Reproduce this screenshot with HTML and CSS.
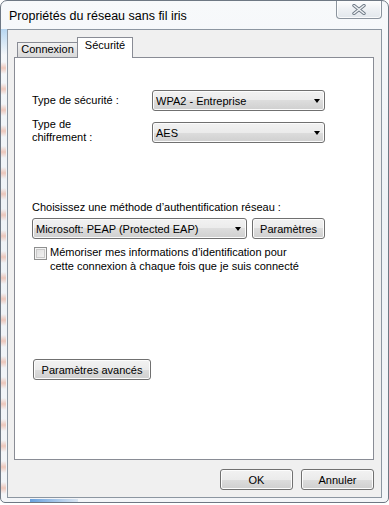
FILE: index.html
```html
<!DOCTYPE html>
<html lang="fr">
<head>
    <meta charset="UTF-8">
    <meta name="viewport" content="width=device-width, initial-scale=1.0">
    <title>Propriétés du réseau sans fil iris</title>
    <link rel="stylesheet" href="styles.css">
</head>
<body>
    <div class="window">
        <div class="titlebar">
            <span class="title">Propriétés du réseau sans fil iris</span>
            <div class="close-btn">
                <svg width="14" height="11" viewBox="0 0 14 11">
                    <path d="M2 1.5 L12 9.5 M12 1.5 L2 9.5" stroke="#6f7a86" stroke-width="3.4" stroke-linecap="round"/>
                    <path d="M2 1.5 L12 9.5 M12 1.5 L2 9.5" stroke="#eef1f4" stroke-width="1.6" stroke-linecap="round"/>
                </svg>
            </div>
        </div>

        <div class="client">
            <div class="tabs">
                <div class="tab">Connexion</div>
                <div class="tab active">Sécurité</div>
            </div>

            <div class="panel">
                <div class="row row-first">
                    <div class="field-label">Type de sécurité :</div>
                    <div class="combo combo-type">WPA2 - Entreprise<span class="arrow"></span></div>
                </div>
                <div class="row row-cipher">
                    <div class="field-label">Type de<br>chiffrement :</div>
                    <div class="combo combo-type">AES<span class="arrow"></span></div>
                </div>

                <div class="auth-label">Choisissez une méthode d’authentification réseau :</div>
                <div class="auth-row">
                    <div class="combo combo-auth">Microsoft: PEAP (Protected EAP)<span class="arrow"></span></div>
                    <button class="btn btn-settings">Paramètres</button>
                </div>

                <div class="check-row">
                    <span class="checkbox"></span>
                    <span class="check-text">Mémoriser mes informations d’identification pour<br>cette connexion à chaque fois que je suis connecté</span>
                </div>

                <button class="btn btn-advanced">Paramètres avancés</button>
            </div>

            <div class="actions">
                <button class="btn">OK</button>
                <button class="btn">Annuler</button>
            </div>
        </div>
    </div>
</body>
</html>
```

FILE: styles.css
```css
html, body {
    margin: 0;
    padding: 0;
    background: #ffffff;
}

body {
    font-family: "Liberation Sans", Arial, sans-serif;
    font-size: 11px;
    color: #000;
}

.window {
    box-sizing: border-box;
    width: 389px;
    height: 503px;
    border: 1px solid #6e7884;
    border-radius: 7px 7px 5px 5px;
    display: flex;
    flex-direction: column;
    background:
        linear-gradient(to right, rgba(70, 140, 215, 0.8), rgba(140, 180, 220, 0.25)) 29px 100% / 48px 3px no-repeat,
        linear-gradient(to bottom, rgba(120, 180, 230, 0.5), rgba(120, 180, 230, 0)) 0 28px / 6px 26px no-repeat,
        repeating-linear-gradient(to bottom, rgba(236, 150, 120, 0) 0, rgba(236, 150, 120, 0) 5px, rgba(232, 145, 115, 0.45) 11px, rgba(236, 150, 120, 0) 17px, rgba(236, 150, 120, 0) 21px) 0 56px / 5px 100% no-repeat,
        linear-gradient(to bottom, #f7f9fb, #eef2f6 40%, #f3f5f8);
    overflow: hidden;
}

.titlebar {
    height: 28px;
    display: flex;
    justify-content: space-between;
    align-items: flex-start;
    padding-left: 8px;
    padding-right: 6px;
}

.title {
    margin-top: 7px;
    line-height: 16px;
    font-size: 12.5px;
}

.close-btn {
    box-sizing: border-box;
    width: 46px;
    height: 19px;
    margin-top: -1px;
    border: 1px solid #8b949e;
    border-top: none;
    border-radius: 0 0 4px 4px;
    background: linear-gradient(to bottom, #ffffff, #eef1f4 50%, #e2e7ec);
    box-shadow: inset 0 0 0 1px rgba(255, 255, 255, 0.8);
    display: flex;
    justify-content: center;
    align-items: center;
}

.client {
    box-sizing: border-box;
    height: 469px;
    margin: 0 6px;
    border: 1px solid #8c96a1;
    background: #f0f0f0;
    padding: 7px 7px 7px 6px;
    display: flex;
    flex-direction: column;
}

.tabs {
    height: 20px;
    display: flex;
    align-items: flex-end;
    padding-left: 3px;
}

.tab {
    box-sizing: border-box;
    height: 15px;
    width: 61px;
    border: 1px solid #898c95;
    border-bottom: none;
    background: linear-gradient(to bottom, #f2f2f2, #e4e4e4 50%, #d9d9d9);
    text-align: center;
    line-height: 13px;
}

.tab.active {
    width: 56px;
    height: 21px;
    margin-left: -1px;
    margin-bottom: -1px;
    background: #ffffff;
    position: relative;
    z-index: 1;
    padding-top: 1px;
}

.panel {
    box-sizing: border-box;
    height: 403px;
    border: 1px solid #898c95;
    background: #ffffff;
    padding-left: 17px;
    display: flex;
    flex-direction: column;
    align-items: flex-start;
}

.row {
    display: flex;
    align-items: center;
}

.row-first {
    margin-top: 32px;
}

.row-cipher {
    margin-top: 7px;
    align-items: flex-end;
}

.field-label {
    width: 120px;
    line-height: 13px;
}

.row-cipher .field-label {
    margin-bottom: -1px;
}

.combo {
    box-sizing: border-box;
    height: 21px;
    border: 1px solid #707070;
    border-radius: 3px;
    background: linear-gradient(to bottom, #f2f2f2, #ebebeb 50%, #dddddd 50%, #cfcfcf);
    box-shadow: inset 0 0 0 1px #fcfcfc;
    display: flex;
    align-items: center;
    justify-content: space-between;
    padding: 0 4px 0 3px;
    white-space: nowrap;
}

.combo-type {
    width: 173px;
}

.combo-auth {
    width: 215px;
    padding-right: 5px;
}

.arrow {
    width: 0;
    height: 0;
    border-left: 3.5px solid transparent;
    border-right: 3.5px solid transparent;
    border-top: 4px solid #000;
    margin-top: 1px;
}

.auth-label {
    margin-top: 57px;
    line-height: 15px;
}

.auth-row {
    margin-top: 3px;
    display: flex;
    gap: 5px;
}

.btn {
    box-sizing: border-box;
    height: 21px;
    width: 73px;
    border: 1px solid #707070;
    border-radius: 3px;
    background: linear-gradient(to bottom, #f2f2f2, #ebebeb 50%, #dddddd 50%, #cfcfcf);
    box-shadow: inset 0 0 0 1px #fcfcfc;
    font-family: inherit;
    font-size: 11px;
    color: #000;
    padding: 0;
    text-align: center;
}

.check-row {
    margin-top: 8px;
    margin-left: 2px;
    display: flex;
    align-items: flex-start;
}

.checkbox {
    box-sizing: border-box;
    width: 13px;
    height: 13px;
    border: 1px solid #8e8f8f;
    background: linear-gradient(135deg, #dcdcdc, #f6f6f6);
    box-shadow: inset 0 0 0 1px #f4f4f4, inset 0 0 0 2px #c9c9c9;
    flex: none;
}

.check-text {
    margin-left: 3px;
    margin-top: -2px;
    line-height: 14px;
}

.btn-advanced {
    width: 118px;
    margin-top: 86px;
    margin-left: 1px;
}

.actions {
    margin-top: 9px;
    display: flex;
    justify-content: flex-end;
    gap: 8px;
}
```
